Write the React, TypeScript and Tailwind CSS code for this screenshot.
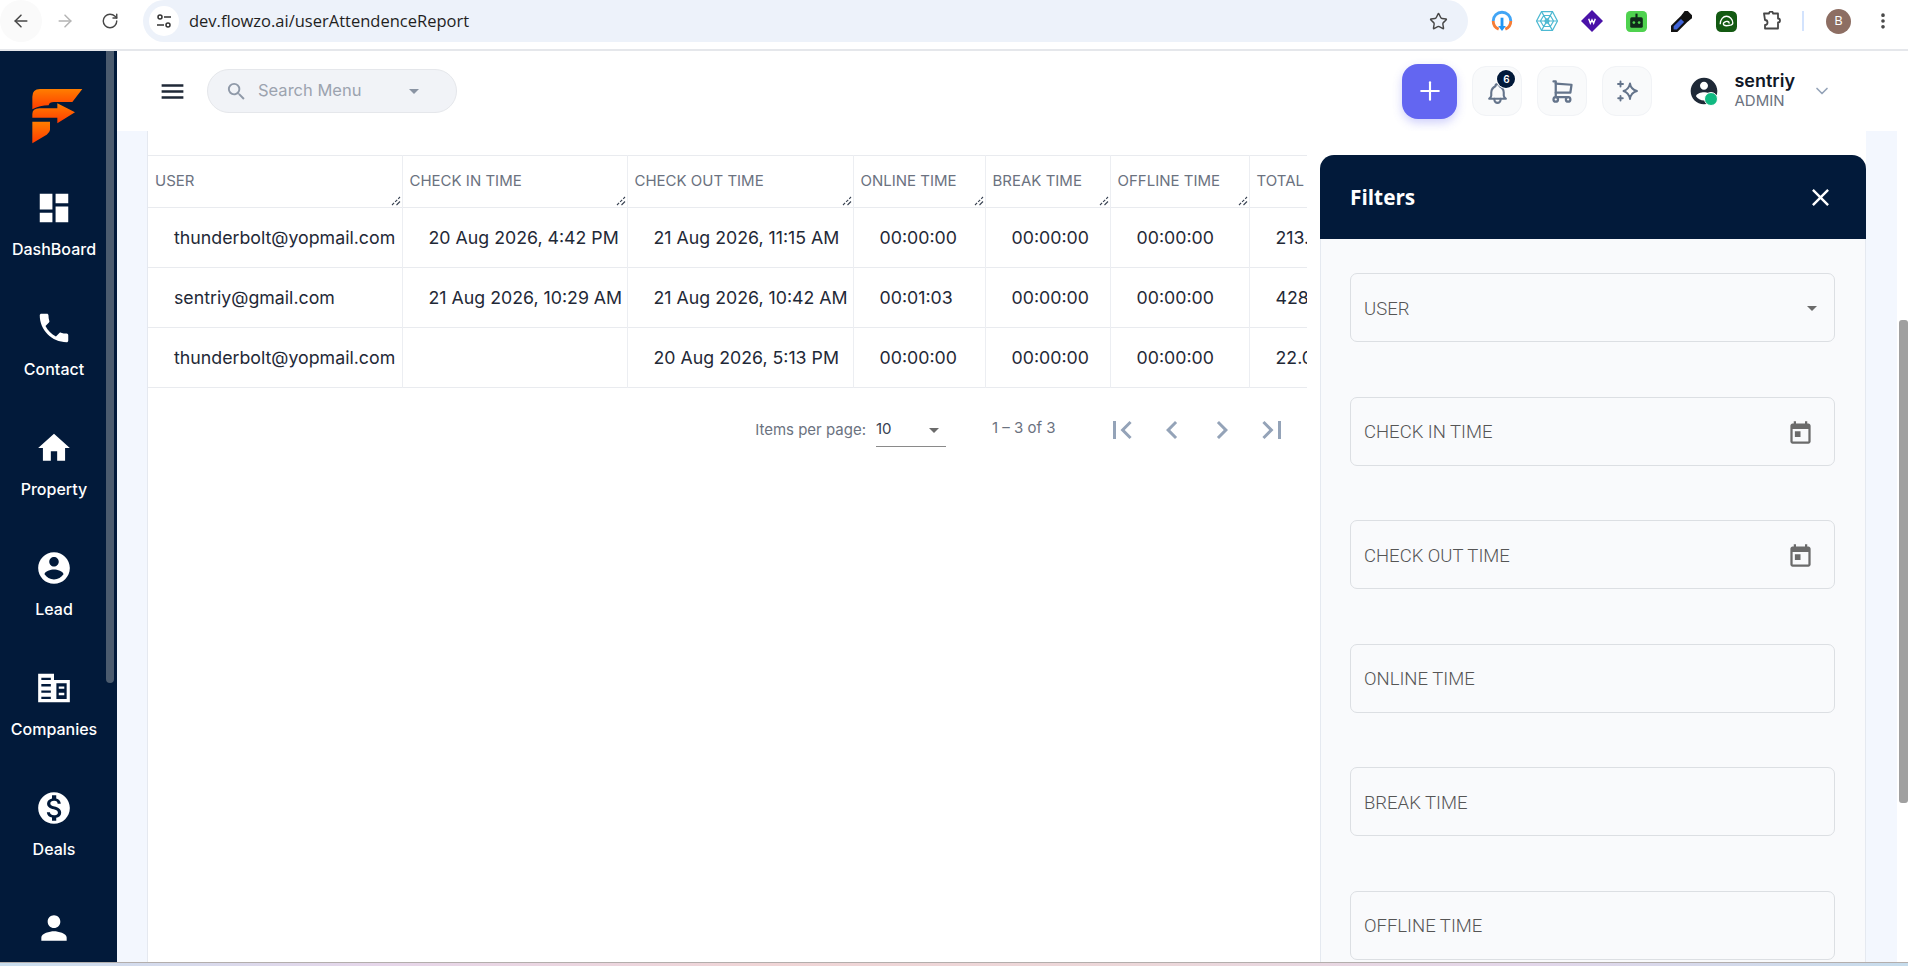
import { ArrowLeft, ArrowRight, ChevronDown, MoreVertical, Plus, RotateCw, Star } from 'lucide-react'
import { TbBell, TbShoppingCart } from 'react-icons/tb'

const sideItems = [
  {
    label: 'DashBoard',
    d: 'M3 13h8V3H3v10zm0 8h8v-6H3v6zm10 0h8V11h-8v10zm0-18v6h8V3h-8z',
  },
  {
    label: 'Contact',
    d: 'M6.62 10.79c1.44 2.83 3.76 5.14 6.59 6.59l2.2-2.2c.27-.27.67-.36 1.02-.24 1.12.37 2.33.57 3.57.57.55 0 1 .45 1 1V20c0 .55-.45 1-1 1-9.39 0-17-7.61-17-17 0-.55.45-1 1-1h3.5c.55 0 1 .45 1 1 0 1.25.2 2.45.57 3.57.11.35.03.74-.25 1.02l-2.2 2.2z',
  },
  { label: 'Property', d: 'M10 20v-6h4v6h5v-8h3L12 3 2 12h3v8z' },
  {
    label: 'Lead',
    d: 'M12 2C6.48 2 2 6.48 2 12s4.48 10 10 10 10-4.48 10-10S17.52 2 12 2zm0 3c1.66 0 3 1.34 3 3s-1.34 3-3 3-3-1.34-3-3 1.34-3 3-3zm0 14.2c-2.5 0-4.71-1.28-6-3.22.03-1.99 4-3.08 6-3.08 1.99 0 5.97 1.09 6 3.08-1.29 1.94-3.5 3.22-6 3.22z',
  },
  {
    label: 'Companies',
    d: 'M2 3H12V7H22V21H2ZM4 5.5V7H10V5.5ZM4 9.5V11H10V9.5ZM4 13.5V15H10V13.5ZM4 17.5V19H10V17.5ZM13.5 9V19H20V9ZM15 11H18.5V12.5H15ZM15 15H18.5V16.5H15Z',
  },
  {
    label: 'Deals',
    d: 'M12 2C6.48 2 2 6.48 2 12s4.48 10 10 10 10-4.48 10-10S17.52 2 12 2zm1.41 16.09V20h-2.67v-1.93c-1.71-.36-3.16-1.46-3.27-3.4h1.96c.1 1.05.82 1.87 2.65 1.87 1.96 0 2.4-.98 2.4-1.59 0-.83-.44-1.61-2.67-2.14-2.48-.6-4.18-1.62-4.18-3.67 0-1.72 1.39-2.84 3.11-3.21V4h2.67v1.95c1.86.45 2.79 1.86 2.85 3.39H14.3c-.05-1.11-.64-1.87-2.22-1.87-1.5 0-2.4.68-2.4 1.64 0 .84.65 1.39 2.67 1.91s4.18 1.39 4.18 3.91c-.01 1.83-1.38 2.83-3.12 3.16z',
  },
  {
    label: '',
    d: 'M12 12c2.21 0 4-1.79 4-4s-1.79-4-4-4-4 1.79-4 4 1.79 4 4 4zm0 2c-2.67 0-8 1.34-8 4v2h16v-2c0-2.66-5.33-4-8-4z',
  },
]

const columns = [
  { name: 'USER', w: 'w-[254px]' },
  { name: 'CHECK IN TIME', w: 'w-[225px]' },
  { name: 'CHECK OUT TIME', w: 'w-[226px]' },
  { name: 'ONLINE TIME', w: 'w-[132px]' },
  { name: 'BREAK TIME', w: 'w-[125px]' },
  { name: 'OFFLINE TIME', w: 'w-[139px]' },
  { name: 'TOTAL', w: 'w-[199px]' },
]

const rows = [
  ['thunderbolt@yopmail.com', '20 Aug 2026, 4:42 PM', '21 Aug 2026, 11:15 AM', '00:00:00', '00:00:00', '00:00:00', '213.55'],
  ['sentriy@gmail.com', '21 Aug 2026, 10:29 AM', '21 Aug 2026, 10:42 AM', '00:01:03', '00:00:00', '00:00:00', '428.20'],
  ['thunderbolt@yopmail.com', '', '20 Aug 2026, 5:13 PM', '00:00:00', '00:00:00', '00:00:00', '22.05'],
]

const filters = ['USER', 'CHECK IN TIME', 'CHECK OUT TIME', 'ONLINE TIME', 'BREAK TIME', 'OFFLINE TIME']

const MatIcon = ({ d, className }: { d: string; className?: string }) => (
  <svg viewBox="0 0 24 24" fill="currentColor" fillRule="evenodd" className={className}>
    <path d={d} />
  </svg>
)

const Logo = () => (
  <svg viewBox="0 0 210 210" className="h-[70px] w-[70px]">
    <defs>
      <linearGradient id="logoFill" x1="0" y1="0" x2="0" y2="1">
        <stop offset="0" stopColor="#ff7e00" />
        <stop offset="1" stopColor="#ff3a00" />
      </linearGradient>
    </defs>
    <path
      fill="url(#logoFill)"
      d="M37 88V50Q37 27 60 27H187L157 66H102Q88 66 86 76Q60 76 37 88Z"
    />
    <path fill="url(#logoFill)" d="M37 113V102Q37 86 58 85H112V70L165 97L112 130V113Z" />
    <path fill="url(#logoFill)" d="M37 125H90V150Q89 158 80 164L37 190Z" />
  </svg>
)

const ResizeHandle = () => (
  <svg viewBox="0 0 10 10" className="absolute right-[1px] bottom-[1px] h-[10px] w-[10px]" stroke="#374151" strokeWidth="1.1">
    <path d="M1 9L9 1" strokeDasharray="3 1.4" />
    <path d="M5.5 9L9 5.5" />
  </svg>
)

const BrowserBar = () => (
  <div className="flex h-[51px] shrink-0 border-b-2 border-[#e5e7eb] bg-white pb-[8px]">
    <div className="flex h-[42px] w-[143px] shrink-0 items-center text-[#474747]">
      <div className="flex h-[42px] w-[42px] items-center justify-center rounded-full bg-[#fafafa]">
        <ArrowLeft size={20} strokeWidth={1.8} />
      </div>
      <ArrowRight size={20} strokeWidth={1.8} className="ml-[13px] text-[#b4b4b4]" />
      <RotateCw size={18} strokeWidth={1.9} className="ml-[26px]" />
    </div>
    <div className="flex h-[42px] w-[1325px] shrink-0 items-center rounded-r-full rounded-l-full bg-[#edf2fa] pr-[20px] pl-[6px]">
      <div className="flex h-[30px] w-[30px] items-center justify-center rounded-full bg-white">
        <svg viewBox="0 0 16 16" className="h-[16px] w-[16px]" fill="none" stroke="#333" strokeWidth="1.5">
          <circle cx="4" cy="4" r="2" />
          <path d="M8 4h7M1 12h7" />
          <circle cx="12" cy="12" r="2" />
        </svg>
      </div>
      <span className="ml-[10px] font-['Open_Sans',sans-serif] text-[16.5px] text-[#1f1f1f]">dev.flowzo.ai/userAttendenceReport</span>
      <Star size={19} strokeWidth={1.8} className="ml-auto text-[#474747]" />
    </div>
    <div className="flex h-[42px] flex-1 items-center">
      <svg viewBox="0 0 20 20" className="ml-[23px] h-[22px] w-[22px]" fill="none" strokeWidth="2.6">
        <path d="M2 10a8 8 0 0 1 16 0" stroke="#42a5f5" />
        <path d="M2 10a8 8 0 0 0 5 7.4M18 10a8 8 0 0 1-5 7.4" stroke="#f57c35" />
        <path d="M10 7v9" stroke="#2196f3" />
        <path d="M6.5 14.5h7L10 19z" fill="#2196f3" stroke="none" />
      </svg>
      <svg viewBox="0 0 20 20" className="ml-[23px] h-[22px] w-[22px]" fill="none" stroke="#4db9d2" strokeWidth="1.1">
        <path d="M5 1.5h10L19.5 10 15 18.5H5L.5 10z" />
        <path d="M7 5h6l3 5-3 5H7l-3-5zM9 8h2l1 2-1 2H9l-1-2zM5 1.5 15 18.5M15 1.5 5 18.5M.5 10h19" />
      </svg>
      <svg viewBox="0 0 20 20" className="ml-[23px] h-[22px] w-[22px]">
        <path d="M10 0 20 10 10 20 0 10z" fill="#4a12a8" />
        <path d="M7 8l1.5 4L10 9l1.5 3L13 8" stroke="#fff" strokeWidth="1.3" fill="none" />
      </svg>
      <svg viewBox="0 0 20 20" className="ml-[23px] h-[21px] w-[21px]">
        <rect width="20" height="20" rx="4" fill="#4fd24f" />
        <rect x="4" y="6" width="12" height="10" rx="1.5" fill="#10291a" />
        <rect x="9" y="2.5" width="2" height="4" fill="#10291a" />
        <circle cx="7.5" cy="11" r="1.3" fill="#4fd24f" />
        <circle cx="12.5" cy="11" r="1.3" fill="#4fd24f" />
      </svg>
      <svg viewBox="0 0 20 20" className="ml-[24px] h-[21px] w-[21px]">
        <path d="M11 3 17 9 6 20H0v-6z" fill="#111" />
        <path d="M9.5 7.5 12.5 10.5 5.5 17.5H2.5v-3z" fill="#3f63d8" />
        <path d="M13 0h3l4 4v3l-4 3-6-6z" fill="#111" />
      </svg>
      <svg viewBox="0 0 20 20" className="ml-[24px] h-[21px] w-[21px]" fill="none">
        <rect width="20" height="20" rx="5" fill="#135a12" />
        <path d="M4 12.5C4 8 7 5 10 5s6 3 6 6.5c0 1.5-2 2.5-6 2.5-2 0-3-.8-3-1.8S9 9.5 11 10s1.5 1.5 1 1.8" stroke="#fff" strokeWidth="1.3" />
      </svg>
      <svg viewBox="0 0 20 20" className="ml-[25px] h-[20px] w-[20px]" fill="none" stroke="#474747" strokeWidth="1.8" strokeLinejoin="round">
        <path d="M2 2.5h5a2 2 0 0 1 4 0h5v5a2 2 0 0 1 0 4v6H3v-3.5a2.5 2.5 0 0 0 0-5z" />
      </svg>
      <div className="ml-[20px] h-[20px] w-[2px] bg-[#d3e3fd]" />
      <div className="ml-[22px] flex h-[25px] w-[25px] items-center justify-center rounded-full bg-[#8d6e63] font-['Open_Sans',sans-serif] text-[13px] text-white">
        B
      </div>
      <MoreVertical size={20} strokeWidth={2.4} className="ml-[22px] text-[#474747]" />
    </div>
  </div>
)

const Sidebar = () => (
  <aside className="relative flex w-[117px] shrink-0 flex-col overflow-hidden bg-[#021a3a]">
    <div className="absolute top-0 left-[106px] h-[632px] w-[8px] rounded-b-[4px] bg-[#4b5b6e]" />
    <div className="flex h-[138px] w-[110px] shrink-0 justify-center pt-[29px]">
      <Logo />
    </div>
    {sideItems.map((item, i) => (
      <div key={i} className="flex h-[120px] w-[108px] shrink-0 flex-col items-center">
        <MatIcon d={item.d} className="h-[38px] w-[38px] shrink-0 text-white" />
        {item.label && <span className="mt-[12px] text-[16px] leading-[20px] font-medium text-white">{item.label}</span>}
      </div>
    ))}
  </aside>
)

const Header = () => (
  <header className="flex h-[80px] shrink-0 items-center bg-white">
    <MatIcon
      d="M3 18h18v-2H3v2zm0-5h18v-2H3v2zm0-5h18V6H3v2z"
      className="ml-[41px] h-[29px] w-[29px] text-[#1f2937]"
    />
    <div className="ml-[20px] flex h-[44px] w-[250px] items-center rounded-full border border-[#e5e7eb] bg-[#f1f3f7]">
      <MatIcon
        d="M15.5 14h-.79l-.28-.27A6.47 6.47 0 0 0 16 9.5 6.5 6.5 0 1 0 9.5 16c1.61 0 3.09-.59 4.23-1.57l.27.28v.79l5 4.99L20.49 19l-4.99-5zm-6 0C7.01 14 5 11.99 5 9.5S7.01 5 9.5 5 14 7.01 14 9.5 11.99 14 9.5 14z"
        className="ml-[17px] h-[23px] w-[23px] text-[#8f99a8]"
      />
      <span className="relative top-[-1px] ml-[10px] text-[16.5px] text-[#9ca3af]">Search Menu</span>
      <MatIcon d="M7 10l5 5 5-5z" className="ml-[41px] h-[24px] w-[24px] text-[#8a94a3]" />
    </div>
    <div className="ml-auto flex items-center">
      <button className="flex h-[55px] w-[55px] items-center justify-center rounded-[16px] bg-[#6366f1] text-white shadow-[0_4px_10px_rgba(99,102,241,0.3)]">
        <Plus size={30} strokeWidth={1.7} />
      </button>
      <div className="relative ml-[15px] flex h-[50px] w-[50px] items-center justify-center rounded-[14px] border border-[#f1f3f6] bg-[#f9fafb] text-[#64748b]">
        <TbBell size={25} className="translate-y-[2px]" />
        <span className="absolute top-[3px] right-[6px] flex h-[18px] w-[18px] items-center justify-center rounded-full bg-[#021a3a] text-[10px] font-semibold text-white shadow-[0_0_0_1px_#fff]">
          6
        </span>
      </div>
      <div className="ml-[15px] flex h-[50px] w-[50px] items-center justify-center rounded-[14px] border border-[#f1f3f6] bg-[#f9fafb] text-[#64748b]">
        <TbShoppingCart size={27} />
      </div>
      <div className="ml-[15px] flex h-[50px] w-[50px] items-center justify-center rounded-[14px] border border-[#f1f3f6] bg-[#f9fafb] text-[#64748b]">
        <svg viewBox="0 0 24 24" className="h-[24px] w-[24px]" fill="none" stroke="currentColor" strokeWidth="1.9" strokeLinejoin="round" strokeLinecap="round">
          <path d="M15 4.5c.6 4 2.5 6.4 7 7.5-4.5 1.1-6.4 3.5-7 8-.9-4.5-2.6-6.9-6.5-8 3.9-1.1 5.6-3.5 6.5-7.5z" />
          <path d="M5.5 2.5v5M3 5h5M5.5 17v4.5M3.2 19.2h4.6" />
        </svg>
      </div>
      <div className="relative ml-[37px] h-[30px] w-[30px] text-[#1f2937]">
        <MatIcon
          d="M12 2C6.48 2 2 6.48 2 12s4.48 10 10 10 10-4.48 10-10S17.52 2 12 2zm0 3c1.66 0 3 1.34 3 3s-1.34 3-3 3-3-1.34-3-3 1.34-3 3-3zm0 14.2c-2.5 0-4.71-1.28-6-3.22.03-1.99 4-3.08 6-3.08 1.99 0 5.97 1.09 6 3.08-1.29 1.94-3.5 3.22-6 3.22z"
          className="h-[32px] w-[32px] -translate-x-[1px] -translate-y-[1px]"
        />
        <span className="absolute top-[16px] left-[15px] h-[14px] w-[14px] rounded-full border-[1.5px] border-white bg-[#10b981]" />
      </div>
      <div className="ml-[15px] flex flex-col">
        <span className="text-[18px] leading-[20px] font-semibold text-[#111827]">sentriy</span>
        <span className="text-[15px] leading-[20px] text-[#6b7280]">ADMIN</span>
      </div>
      <ChevronDown size={20} className="mr-[65px] ml-[17px] text-[#94a3b8]" />
    </div>
  </header>
)

const AttendanceTable = () => (
  <div className="w-[1159px] overflow-hidden">
    <table className="w-[1300px] table-fixed border-collapse font-['Inter',sans-serif]">
      <thead>
        <tr className="h-[52px] border-y border-[#e9ebef]">
          {columns.map(col => (
            <th key={col.name} className={`relative border-r border-[#eceef2] pl-[7px] text-left align-middle text-[15px] font-normal whitespace-nowrap text-[#6b7280] ${col.w}`}>
              {col.name}
              <ResizeHandle />
            </th>
          ))}
        </tr>
      </thead>
      <tbody>
        {rows.map((row, r) => (
          <tr key={r} className="h-[60px] border-b border-[#e9ebef]">
            {row.map((cell, c) => (
              <td key={c} className="border-r border-[#eceef2] pt-[1px] pl-[26px] text-[17.75px] whitespace-nowrap text-[#1f2937]">
                {cell}
              </td>
            ))}
          </tr>
        ))}
      </tbody>
    </table>
  </div>
)

const Pagination = () => (
  <div className="flex h-[60px] w-[1159px] items-center justify-end pt-[24px] pr-[17px] font-['Inter',sans-serif] text-[15px]">
    <span className="text-[#6b7280]">Items per page:</span>
    <div className="ml-[10px] flex h-[34px] w-[70px] items-center justify-between border-b border-[#8a8a8a] text-[#374151]">
      10
      <MatIcon d="M7 10l5 5 5-5z" className="h-[24px] w-[24px] text-[#6b6b6b]" />
    </div>
    <span className="mb-[4px] ml-[46px] w-[66px] whitespace-nowrap text-[#6b7280]">1 – 3 of 3</span>
    <div className="ml-[46px] flex items-center text-[#94a3b8]">
      <MatIcon d="M18.41 16.59L13.82 12l4.59-4.59L17 6l-6 6 6 6zM6 6h2v12H6z" className="h-[36px] w-[36px]" />
      <MatIcon d="M15.41 7.41L14 6l-6 6 6 6 1.41-1.41L10.83 12z" className="ml-[14px] h-[36px] w-[36px]" />
      <MatIcon d="M10 6L8.59 7.41 13.17 12l-4.58 4.59L10 18l6-6z" className="ml-[14px] h-[36px] w-[36px]" />
      <MatIcon d="M5.59 7.41L10.18 12l-4.59 4.59L7 18l6-6-6-6zM16 6h2v12h-2z" className="ml-[14px] h-[36px] w-[36px]" />
    </div>
  </div>
)

const FilterPanel = () => (
  <div className="flex w-[546px] shrink-0 flex-col pt-[24px]">
    <div className="flex h-[84px] shrink-0 items-center justify-between rounded-t-[14px] bg-[#021a3a] pr-[32px] pl-[30px]">
      <span className="relative top-[1px] font-['Open_Sans',sans-serif] text-[20.8px] font-bold text-white">Filters</span>
      <MatIcon
        d="M19 6.41L17.59 5 12 10.59 6.41 5 5 6.41 10.59 12 5 17.59 6.41 19 12 13.41 17.59 19 19 17.59 13.41 12z"
        className="mr-[-1px] h-[29px] w-[29px] text-white"
      />
    </div>
    <div className="flex-1 overflow-hidden border-r border-l border-[#e5e9f0] bg-[#f9fafc] pt-[34px] pr-[30px] pl-[29px]">
      {filters.map((name, i) => (
        <div
          key={name}
          className="mb-[54.5px] flex h-[69px] items-center justify-between rounded-[7px] border border-[#dcdfe3] pr-[20px] pl-[13px] font-['Roboto',sans-serif] text-[18.5px] font-light text-[#555]"
        >
          <span className="relative top-[2px]">{name}</span>
          {i === 0 && <MatIcon d="M7 10l5 5 5-5z" className="mr-[-10px] h-[24px] w-[24px] text-[#6b6b6b]" />}
          {(i === 1 || i === 2) && (
            <MatIcon
              d="M19 3h-1V1h-2v2H8V1H6v2H5c-1.11 0-1.99.9-1.99 2L3 19c0 1.1.89 2 2 2h14c1.1 0 2-.9 2-2V5c0-1.1-.9-2-2-2zm0 16H5V8h14v11zM7 10h5v5H7z"
              className="relative top-[2px] h-[27px] w-[27px] text-[#6b6b6b]"
            />
          )}
        </div>
      ))}
    </div>
  </div>
)

const App = () => {
  return (
    <div className="flex h-[966px] w-[1908px] flex-col overflow-hidden bg-white font-['Inter',sans-serif]">
      <BrowserBar />
      <div className="flex h-[911px] shrink-0">
        <Sidebar />
        <div className="flex w-[1780px] shrink-0 flex-col">
          <Header />
          <div className="flex min-h-0 flex-1 bg-[#f3f7fe] pr-[31px] pl-[30px]">
            <div className="flex flex-1 border-l border-[#e5e9f0] bg-white">
              <div className="w-[1172px] shrink-0 pt-[24px]">
                <AttendanceTable />
                <Pagination />
              </div>
              <FilterPanel />
            </div>
          </div>
        </div>
        <div className="w-[11px] shrink-0 bg-white pt-[269px] pl-[2px]">
          <div className="h-[483px] w-[9px] rounded-[3px] bg-[#a0a0a0]" />
        </div>
      </div>
      <div className="h-[4px] shrink-0 border-t border-[#b3aeac] bg-[linear-gradient(90deg,#c9deee,#e6d6ea_20%,#f0d5d6_40%,#ecd7d9_60%,#e3d6ea_80%,#c6dcec)]" />
    </div>
  )
}

export default App
